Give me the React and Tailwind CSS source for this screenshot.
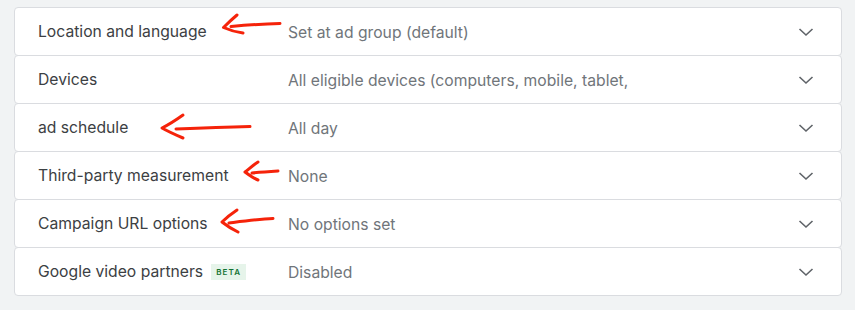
import React from 'react';

const ROWS = [
  { label: 'Location and language', value: 'Set at ad group (default)' },
  { label: 'Devices', value: 'All eligible devices (computers, mobile, tablet,', fade: true },
  { label: 'ad schedule', value: 'All day' },
  { label: 'Third-party measurement', value: 'None' },
  { label: 'Campaign URL options', value: 'No options set' },
  { label: 'Google video partners', value: 'Disabled', beta: true },
];

// hand-drawn red arrows on top of the panel
const ARROWS = [
  'M280 23.5 C262 24 248 25 231 26.5 M237 15 C231 20 227 24 223.5 27.5 C229 30 236 32 243 33',
  'M250 126.5 C228 127 200 128 176 129 M183 115 C176 120 168 125 162 128 C169 132 176 135 183 138',
  'M278 171 C270 171.5 262 172 252 173 M258 162 C253 165 249 169 245 172 C249 175 253 178 258 180',
  'M273 218.5 C260 219 245 221 229 223 M237 210 C231 214 226 218 222 222 C227 226 232 229 238 232',
];

function Chevron() {
  return (
    <svg width="18" height="18" viewBox="0 0 18 18" className="shrink-0">
      <path d="M2.5 6 L9 12 L15.5 6" fill="none" stroke="#5f6368" strokeWidth="1.6" />
    </svg>
  );
}

export default function App() {
  return (
    <div className="relative w-[855px] h-[310px] bg-[#f1f3f4] pt-[7px] pl-[14px]" style={{ fontFamily: 'Inter, Roboto, "Liberation Sans", sans-serif' }}>
      <div className="w-[828px] flex flex-col">
        {ROWS.map((r, i) => (
          <div
            key={r.label}
            className={`h-[49px] flex items-center bg-white border border-[#dadce0] rounded-[4px] pl-[23px] pr-[26px] pt-px ${i > 0 ? '-mt-px' : ''}`}
          >
            <div className="w-[250px] flex items-center gap-[8px] text-[15.7px] text-[#3c4043]">
              <span>{r.label}</span>
              {r.beta && (
                <span className="bg-[#e6f4ea] text-[#137333] text-[8px] font-semibold tracking-[0.14em] px-[5px] py-[4px] leading-none">BETA</span>
              )}
            </div>
            <div className="flex-1 relative">
              <span className="text-[15.7px] text-[#70757a] whitespace-nowrap">{r.value}</span>
              {r.fade && <div className="absolute top-0 bottom-0 left-[338px] w-[20px] bg-gradient-to-r from-white/0 to-white" />}
            </div>
            <Chevron />
          </div>
        ))}
      </div>
      <svg className="absolute inset-0 pointer-events-none" width="855" height="310">
        {ARROWS.map((d, i) => (
          <path key={i} d={d} fill="none" stroke="#f5230a" strokeWidth="3" strokeLinecap="round" strokeLinejoin="round" />
        ))}
      </svg>
    </div>
  );
}
